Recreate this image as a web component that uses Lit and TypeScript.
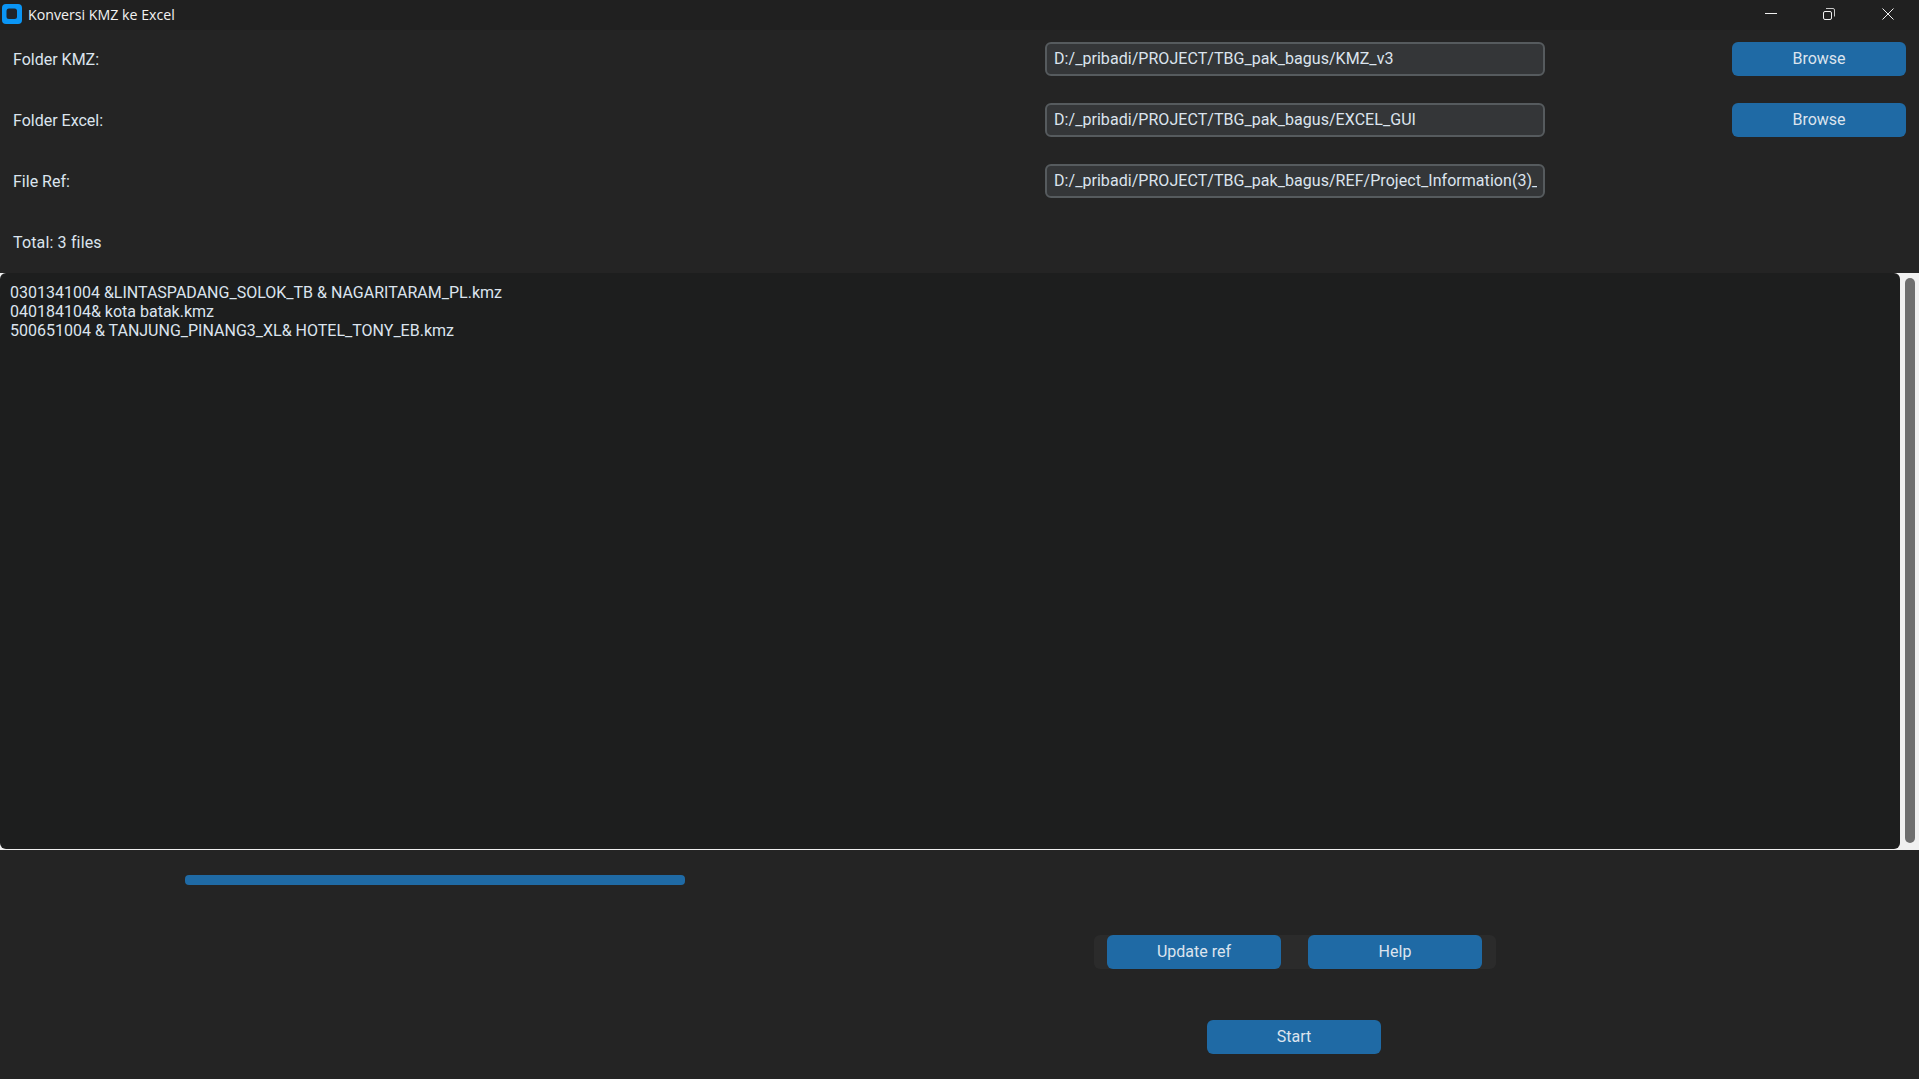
import { LitElement, html, css } from "lit";
import { customElement } from "lit/decorators.js";

@customElement("app-root")
export class AppRoot extends LitElement {
  static styles = css`
    :host { display: flex; flex-direction: column; width: 1919px; height: 1079px; overflow: hidden; background: #242424; color: #dce4ee; font-family: Roboto, "Liberation Sans", sans-serif; font-size: 16px; }
    .title { box-sizing: border-box; display: flex; align-items: center; height: 30px; padding-bottom: 2px; background: #202020; flex: none; }
    .app-icon { margin-left: 2px; width: 20px; height: 20px; flex: none; }
    .title-text { margin-left: 6px; font-family: "Open Sans", sans-serif; font-size: 14.2px; color: #f2f2f2; }
    .win { margin-left: auto; margin-right: 25px; display: flex; gap: 46px; }
    .win svg { width: 12px; height: 12px; display: block; }
    .win svg:last-child { margin-left: 1px; }
    .form { display: grid; grid-template-columns: 1045px 500px 187px 174px; grid-auto-rows: 34px; row-gap: 27px; padding: 12px 0 0 0; align-items: center; flex: none; }
    .label { padding-left: 13px; }
    .total { letter-spacing: 0.15px; }
    input { box-sizing: border-box; width: 100%; height: 34px; border: 2px solid #565b5e; border-radius: 6px; background: #343638; color: #dce4ee; font: inherit; letter-spacing: 0.05px; padding: 0 6px 2px 7px; outline: none; }
    .btn { box-sizing: border-box; display: flex; align-items: center; justify-content: center; width: 174px; height: 34px; padding-bottom: 2px; background: #1f6aa5; border-radius: 6px; color: #dce4ee; }
    .log-wrap { margin-top: 14px; height: 577px; background: #f0f0f0; flex: none; display: flex; }
    .log { width: 1900px; height: 576px; background: #1d1e1e; border-radius: 6px; box-sizing: border-box; padding: 10px 10px; line-height: 19px; white-space: pre; flex: none; }
    .track { flex: 1; padding: 5px 4px 7px 5px; display: flex; }
    .thumb { flex: 1; background: #6e6e6e; border-radius: 5px; }
    .bar { flex: none; margin: 25px 0 0 185px; width: 500px; height: 10px; background: #1f6aa5; border-radius: 4px; }
    .frame { flex: none; margin: 50px 0 0 1094px; width: 402px; height: 34px; background: #2b2b2b; border-radius: 6px; display: flex; gap: 27px; padding-left: 13px; box-sizing: border-box; }
    .start-row { flex: none; margin: 51px 0 0 1207px; }
  `;

  render() {
    const rows = [
      ["Folder KMZ:", "D:/_pribadi/PROJECT/TBG_pak_bagus/KMZ_v3", true],
      ["Folder Excel:", "D:/_pribadi/PROJECT/TBG_pak_bagus/EXCEL_GUI", true],
      ["File Ref:", "D:/_pribadi/PROJECT/TBG_pak_bagus/REF/Project_Information(3)_updated.xlsx", false],
    ] as const;
    return html`
      <div class="title">
        <svg class="app-icon" viewBox="0 0 20 20"><rect width="20" height="20" rx="4" fill="#0a95f5"/><rect x="4.500" y="4.500" width="10.500" height="10.500" rx="2.500" fill="#20242a"/></svg>
        <span class="title-text">Konversi KMZ ke Excel</span>
        <div class="win">
          <svg viewBox="0 0 12 12"><path d="M0 5.500H12" stroke="#f0f0f0" fill="none"/></svg>
          <svg viewBox="0 0 12 12"><rect x=".5" y="3.500" width="8" height="8" rx="1.500" stroke="#f0f0f0" fill="none"/><path d="M3 .5H10A1.500 1.500 0 0 1 11.500 2V8.500" stroke="#c8c8c8" fill="none"/></svg>
          <svg viewBox="0 0 12 12"><path d="M.5.500L11.500 11.500M11.500.500L.5 11.500" stroke="#f0f0f0" fill="none"/></svg>
        </div>
      </div>
      <div class="form">
        ${rows.map(([l, v, b]) => html`
          <div class="label">${l}</div>
          <input readonly .value=${v} />
          <div></div>
          ${b ? html`<div class="btn">Browse</div>` : html`<div></div>`}
        `)}
        <div class="label total">Total: 3 files</div>
      </div>
      <div class="log-wrap">
        <div class="log">0301341004 &LINTASPADANG_SOLOK_TB & NAGARITARAM_PL.kmz
040184104& kota batak.kmz
500651004 & TANJUNG_PINANG3_XL& HOTEL_TONY_EB.kmz</div>
        <div class="track"><div class="thumb"></div></div>
      </div>
      <div class="bar"></div>
      <div class="frame"><div class="btn">Update ref</div><div class="btn">Help</div></div>
      <div class="start-row"><div class="btn">Start</div></div>
    `;
  }
}
